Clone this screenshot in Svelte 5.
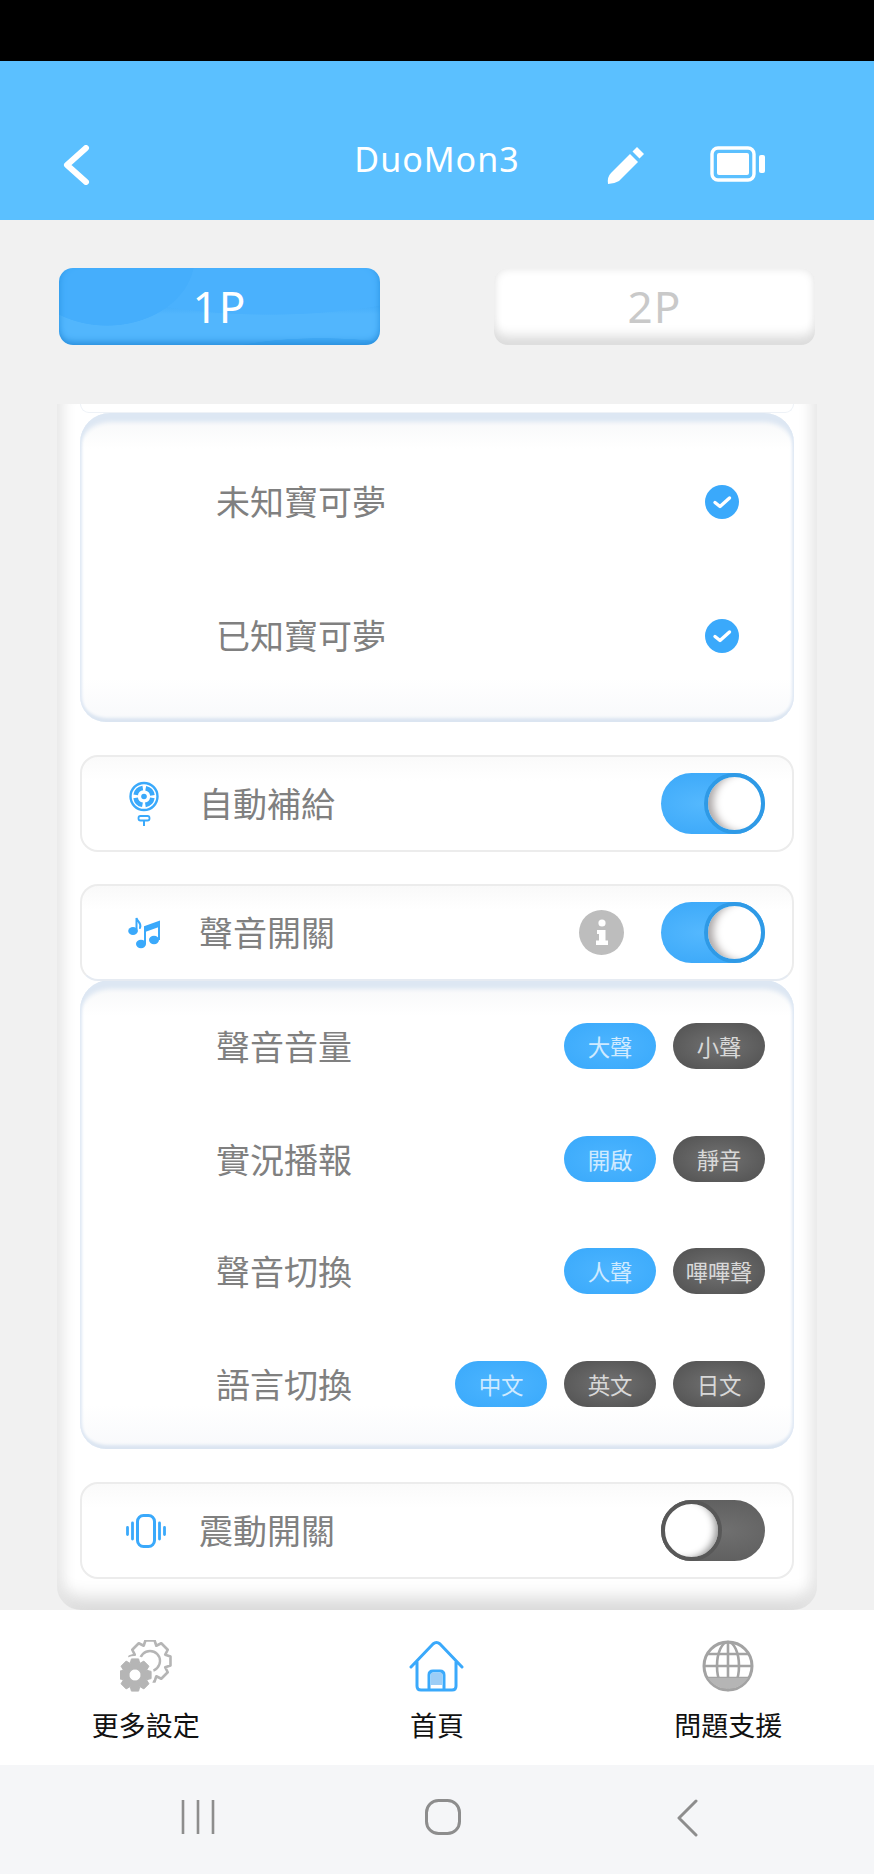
<script>
	const soundRows = [
		{ label: '聲音音量', options: ['大聲', '小聲'] },
		{ label: '實況播報', options: ['開啟', '靜音'] },
		{ label: '聲音切換', options: ['人聲', '嗶嗶聲'] },
		{ label: '語言切換', options: ['中文', '英文', '日文'] }
	];
	const knownRows = ['未知寶可夢', '已知寶可夢'];

	// outline of a cog, used for both settings gears
	function gearPath(cx, cy, outer, inner, teeth) {
		const step = (Math.PI * 2) / teeth;
		const pts = [];
		for (let i = 0; i < teeth; i++) {
			const a = i * step;
			[
				[inner, -0.5],
				[outer, -0.28],
				[outer, 0.28],
				[inner, 0.5]
			].forEach(([r, k]) => {
				const t = a + k * step;
				pts.push(`${(cx + r * Math.cos(t)).toFixed(2)} ${(cy + r * Math.sin(t)).toFixed(2)}`);
			});
		}
		return 'M' + pts.join(' L') + ' Z';
	}
</script>

{#snippet toggle(on)}
	<div class="toggle" class:on>
		<div class="knob"></div>
	</div>
{/snippet}

<div class="page">
	<div class="status"></div>

	<header>
		<div class="head-left">
			<svg class="back" viewBox="0 0 27 40" width="27" height="40">
				<path d="M23 3 L4 20 L23 37" fill="none" stroke="#fff" stroke-width="6" stroke-linecap="round" stroke-linejoin="round" />
			</svg>
		</div>
		<div class="title">DuoMon3</div>
		<div class="head-right">
			<svg viewBox="0 0 42 40" width="42" height="40">
				<path d="M3 38 Q2 31 6 27 L25 8 L33 16 L14 35 Q9 38 3 38 Z" fill="#fff" />
				<path d="M27.500 5.500 L32 1 L39 8 L34.500 12.500 Z" fill="#fff" />
			</svg>
			<svg class="battery" viewBox="0 0 56 36" width="56" height="36">
				<rect x="2" y="2" width="42" height="32" rx="6" fill="none" stroke="#fff" stroke-width="3.400" />
				<rect x="7" y="7" width="32" height="22" rx="2" fill="#fff" />
				<rect x="49" y="9" width="6" height="18" rx="2" fill="#fff" />
			</svg>
		</div>
	</header>

	<div class="tabs">
		<div class="tab active">1P</div>
		<div class="tab">2P</div>
	</div>

	<section class="panel">
		<div class="sliver"></div>

		<div class="sub known">
			{#each knownRows as row}
				<div class="known-row">
					<span class="label">{row}</span>
					<svg viewBox="0 0 34 34" width="34" height="34">
						<circle cx="17" cy="17" r="17" fill="#3aa9fb" />
						<path d="M10 17.500 L15 21.500 L24.500 13" fill="none" stroke="#fff" stroke-width="3.400" stroke-linecap="round" stroke-linejoin="round" />
					</svg>
				</div>
			{/each}
		</div>

		<div class="card gap">
			<div class="card-icon">
				<svg viewBox="0 0 32 46" width="32" height="46">
					<circle cx="16" cy="15.500" r="13.500" fill="none" stroke="#3aa9fb" stroke-width="2.400" />
					<circle cx="16" cy="15.500" r="8.500" fill="none" stroke="#3aa9fb" stroke-width="4.600" stroke-dasharray="10.350 3" stroke-dashoffset="-1.500" />
					<circle cx="16" cy="15.500" r="2.800" fill="#3aa9fb" />
					<rect x="10.500" y="35" width="11" height="4.500" rx="2" fill="none" stroke="#3aa9fb" stroke-width="1.800" />
					<path d="M16 39.500 V45" stroke="#3aa9fb" stroke-width="2" />
				</svg>
			</div>
			<span class="card-label">自動補給</span>
			{@render toggle(true)}
		</div>

		<div class="card gap-sound">
			<div class="card-icon">
				<svg viewBox="0 0 32 32" width="32" height="32">
					<ellipse cx="5" cy="14" rx="4.800" ry="4" fill="#3aa9fb" />
					<path d="M8.500 14 V1 C9.500 5 14 6 12 11" fill="none" stroke="#3aa9fb" stroke-width="2" stroke-linecap="round" />
					<ellipse cx="13" cy="27" rx="5" ry="4.200" fill="#3aa9fb" />
					<ellipse cx="26" cy="23" rx="5" ry="4.200" fill="#3aa9fb" />
					<path d="M17 27 V10 L31 5 V23" fill="none" stroke="#3aa9fb" stroke-width="2" />
					<path d="M17 10 L31 5 V10 L17 15 Z" fill="#3aa9fb" />
				</svg>
			</div>
			<span class="card-label">聲音開關</span>
			<svg class="info" viewBox="0 0 45 45" width="45" height="45">
				<circle cx="22.500" cy="22.500" r="22.500" fill="#bdbdbd" />
				<circle cx="23" cy="13" r="3.600" fill="#fff" />
				<path d="M18 20 H26.500 V30.500 H29 V35 H17 V30.500 H20 V24 H18 Z" fill="#fff" />
			</svg>
			{@render toggle(true)}
		</div>

		<div class="sub sound">
			{#each soundRows as row}
				<div class="sound-row">
					<span class="label">{row.label}</span>
					<div class="pills">
						{#each row.options as option, i}
							<span class="pill" class:selected={i === 0}>{option}</span>
						{/each}
					</div>
				</div>
			{/each}
		</div>

		<div class="card gap">
			<div class="card-icon vibrate">
				<svg viewBox="0 0 40 34" width="40" height="34">
					<rect x="11.500" y="1.500" width="17" height="31" rx="6" fill="none" stroke="#3aa9fb" stroke-width="3" />
					<path d="M6.500 9 V25 M33.500 9 V25" stroke="#3aa9fb" stroke-width="2.800" stroke-linecap="round" />
					<path d="M1.500 13.500 V20.500 M38.500 13.500 V20.500" stroke="#3aa9fb" stroke-width="2.800" stroke-linecap="round" />
				</svg>
			</div>
			<span class="card-label">震動開關</span>
			{@render toggle(false)}
		</div>
	</section>

	<nav>
		<div class="nav-item">
			<svg viewBox="0 0 52 52" width="52" height="52">
				<path d={gearPath(30, 21, 21, 16.500, 8)} fill="none" stroke="#b5b5b5" stroke-width="2.600" stroke-linejoin="round" />
				<circle cx="30" cy="21" r="10" fill="none" stroke="#b5b5b5" stroke-width="2.400" />
				<circle cx="15" cy="35" r="19" fill="#fff" />
				<path d={gearPath(15, 35, 16.500, 12.500, 8) + ' M15 29 a6 6 0 1 0 0.010 0 Z'} fill="#b5b5b5" fill-rule="evenodd" stroke="#b5b5b5" stroke-width="1" stroke-linejoin="round" />
			</svg>
			<span>更多設定</span>
		</div>
		<div class="nav-item">
			<svg viewBox="0 0 55 52" width="55" height="52">
				<path d="M2 27 L24 4 Q27.500 1 31 4 L53 27 M8 22 V46 Q8 50 12 50 H43 Q47 50 47 46 V22" fill="none" stroke="#3aa9fb" stroke-width="3" stroke-linecap="round" stroke-linejoin="round" />
				<path d="M20 50 V35 Q20 31 24 31 H31 Q35 31 35 35 V50" fill="none" stroke="#3aa9fb" stroke-width="3" />
				<rect x="22" y="33" width="11" height="12" fill="#9ccdf6" />
			</svg>
			<span>首頁</span>
		</div>
		<div class="nav-item">
			<svg viewBox="0 0 52 52" width="52" height="52">
				<circle cx="26" cy="26" r="24" fill="none" stroke="#a3a3a3" stroke-width="3" />
				<ellipse cx="26" cy="26" rx="11" ry="24" fill="none" stroke="#a3a3a3" stroke-width="2.600" />
				<path d="M26 2 V50 M2 26 H50 M6 14 H46 M6 38 H46" stroke="#a3a3a3" stroke-width="2.600" />
				<path d="M6 38 H46 A24 24 0 0 1 6 38 Z" fill="#b5b5b5" />
			</svg>
			<span>問題支援</span>
		</div>
	</nav>

	<div class="sysbar">
		<svg viewBox="0 0 34 36" width="34" height="36">
			<path d="M2 1 V35 M17 1 V35 M32 1 V35" stroke="#8d8d8d" stroke-width="2.600" />
		</svg>
		<svg viewBox="0 0 36 36" width="36" height="36">
			<rect x="1.500" y="1.500" width="33" height="33" rx="12" fill="none" stroke="#8d8d8d" stroke-width="3" />
		</svg>
		<svg viewBox="0 0 22 38" width="22" height="38">
			<path d="M20 2 L3 19 L20 36" fill="none" stroke="#8d8d8d" stroke-width="3" stroke-linecap="round" stroke-linejoin="round" />
		</svg>
	</div>
</div>

<style>
	:global(body) {
		margin: 0;
		background: #f1f1f1;
	}

	.page {
		width: 874px;
		height: 1874px;
		display: flex;
		flex-direction: column;
		overflow: hidden;
		background: #f1f1f1;
		font-family: 'Noto Sans CJK TC', 'Noto Sans', sans-serif;
	}

	.status {
		height: 61px;
		background: #000;
	}

	header {
		height: 159px;
		box-sizing: border-box;
		padding-top: 78px;
		background: #5bc0ff;
		display: grid;
		grid-template-columns: 1fr 166px 1fr;
		align-items: start;
	}

	.head-left {
		padding-left: 63px;
	}

	.back {
		display: block;
		margin-top: 6px;
	}

	.title {
		font-family: 'Noto Sans', sans-serif;
		font-size: 34px;
		font-weight: 400;
		letter-spacing: 1px;
		line-height: 40px;
		color: #fff;
		text-align: center;
		white-space: nowrap;
	}

	.head-right {
		display: flex;
		align-items: center;
		gap: 63px;
		padding-left: 85px;
		margin-top: 7px;
	}

	.battery {
		margin-bottom: 4px;
	}

	.tabs {
		display: flex;
		justify-content: space-between;
		padding: 48px 59px 59px;
	}

	.tab {
		width: 321px;
		height: 77px;
		border-radius: 14px;
		font-family: 'Noto Sans', sans-serif;
		font-size: 44px;
		font-weight: 400;
		letter-spacing: 1px;
		line-height: 77px;
		text-align: center;
		color: #c9c9c9;
		background: #fff;
		box-shadow:
			inset 0 -16px 12px -7px #dcdcdc,
			inset 0 0 10px #e2e2e2;
	}

	.tab.active {
		color: #fff;
		background:
			radial-gradient(ellipse 110px 22px at 262px 92px, #44acf7 98%, transparent),
			radial-gradient(ellipse 88px 68px at 48px -10px, #45aefc 99%, transparent),
			radial-gradient(ellipse 230px 72px at 210px -25px, #4ab1fd 99%, transparent),
			linear-gradient(#3aa5f8 0 30px, #52b6fd 46px);
		box-shadow:
			inset 0 -9px 7px -6px #2a8fdd,
			inset 7px 0 7px -7px #2a93e2,
			inset -7px 0 7px -7px #2a93e2;
	}

	.panel {
		height: 1206px;
		box-sizing: border-box;
		margin: 0 57px;
		padding: 0 23px;
		background: #fff;
		border-radius: 0 0 24px 24px;
		box-shadow:
			inset 18px 0 14px -12px #e6e6e6,
			inset -18px 0 14px -12px #e6e6e6,
			inset 0 -26px 18px -14px #d9d9d9;
	}

	.sliver {
		height: 9px;
		background: #fff;
		border-radius: 0 0 18px 18px;
		border: 1px solid #eef2f7;
		border-top: 0;
		box-sizing: border-box;
	}

	.sub {
		box-sizing: border-box;
		border-radius: 30px 30px 26px 26px;
		background: linear-gradient(#f6f7f8, #fff 36px, #fff calc(100% - 44px), #f8f9fb);
		box-shadow:
			inset 0 12px 4px -3px #dde7f3,
			inset 4px 0 3px -2px #dfe8f4,
			inset -4px 0 3px -2px #dfe8f4,
			inset 0 -6px 3px -2px #dbe5f1;
	}

	.known {
		height: 309px;
		padding: 22px 55px 0 136px;
	}

	.known-row {
		height: 134px;
		display: flex;
		align-items: center;
		justify-content: space-between;
	}

	.known-row .label {
		padding-bottom: 3px;
	}

	.label,
	.card-label {
		font-size: 34px;
		line-height: 44px;
		color: #808080;
		white-space: nowrap;
	}

	.card {
		height: 97px;
		box-sizing: border-box;
		display: flex;
		align-items: center;
		padding-right: 27px;
		border: 2px solid #ececec;
		border-radius: 18px;
		background: linear-gradient(#fafafa, #fff 24px);
	}

	.card-label {
		flex: 1;
		padding-bottom: 2px;
	}

	.gap {
		margin-top: 33px;
	}

	.gap-sound {
		margin-top: 32px;
		position: relative;
		z-index: 1;
		background: linear-gradient(#f9f9f9, #fff 24px);
		border-bottom-color: #e6ebf2;
	}

	.card-icon {
		width: 117px;
		flex: none;
		box-sizing: border-box;
		padding-left: 46px;
		display: flex;
		align-items: center;
	}

	.card-icon.vibrate {
		padding-left: 44px;
	}

	.card-icon svg {
		display: block;
	}

	.info {
		margin-right: 37px;
	}

	.toggle {
		width: 104px;
		height: 61px;
		border-radius: 31px;
		background: radial-gradient(ellipse at 60% 50%, #707070, #5a5a5a);
		display: flex;
		justify-content: flex-start;
	}

	.toggle.on {
		background: radial-gradient(ellipse at 40% 50%, #54b8fe, #36a5f8);
		justify-content: flex-end;
	}

	.knob {
		width: 61px;
		height: 61px;
		box-sizing: border-box;
		border-radius: 50%;
		background: #fff;
		border: 4px solid #585858;
		box-shadow: inset -7px -2px 7px -4px #999;
	}

	.toggle.on .knob {
		border: 4px solid #2f9ae6;
		box-shadow: inset 10px -1px 8px -5px #a9a4a4;
	}

	.sound {
		height: 469px;
		margin-top: -1px;
		padding: 10px 29px 0 136px;
	}

	.sound-row {
		height: 112.500px;
		display: flex;
		align-items: center;
		justify-content: space-between;
	}

	.pills {
		display: flex;
		gap: 17px;
	}

	.pill {
		width: 92px;
		height: 46px;
		border-radius: 23px;
		font-size: 22.500px;
		line-height: 46px;
		text-align: center;
		white-space: nowrap;
		color: #d8d8d8;
		background: radial-gradient(ellipse at center, #727272, #505050);
		letter-spacing: -0.300px;
	}

	.pill.selected {
		color: #cfeaff;
		background: radial-gradient(ellipse at center, #4db5ff, #39a9fb);
	}

	nav {
		height: 155px;
		box-sizing: border-box;
		padding-top: 30px;
		background: #fff;
		display: grid;
		grid-template-columns: repeat(3, 1fr);
	}

	.nav-item {
		display: flex;
		flex-direction: column;
		align-items: center;
		gap: 15px;
		font-size: 27px;
		line-height: 36px;
		color: #111;
	}

	.sysbar {
		flex: 1;
		background: #f5f6f8;
		display: grid;
		grid-template-columns: repeat(3, 244.500px);
		justify-items: center;
		padding: 34px 0 0 76px;
		align-items: start;
	}
</style>
